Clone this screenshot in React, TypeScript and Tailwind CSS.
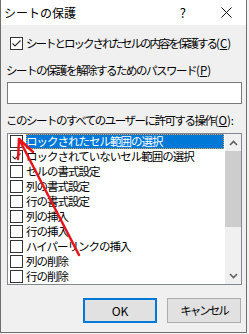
import React from 'react';

const items = [
  { label: 'ロックされたセル範囲の選択', checked: false },
  { label: 'ロックされていないセル範囲の選択', checked: true },
  { label: 'セルの書式設定', checked: false },
  { label: '列の書式設定', checked: false },
  { label: '行の書式設定', checked: false },
  { label: '列の挿入', checked: false },
  { label: '行の挿入', checked: false },
  { label: 'ハイパーリンクの挿入', checked: false },
  { label: '列の削除', checked: false },
  { label: '行の削除', checked: false },
];

// Windows風のチェックボックス
const CheckBox = ({ checked }: { checked: boolean }) => (
  <span className="flex h-[13px] w-[13px] shrink-0 items-center justify-center border border-[#333333] bg-white">
    {checked && (
      <svg width="11" height="11" viewBox="0 0 11 11">
        <path d="M1.5 5.5 L4 8 L9.5 2.5" fill="none" stroke="#333333" strokeWidth="1.2" />
      </svg>
    )}
  </span>
);

// アクセスキー付きの(X)表記
const AccessKey = ({ k, colon }: { k: string; colon?: boolean }) => (
  <span className="tracking-normal">
    (<u>{k}</u>){colon ? ':' : ''}
  </span>
);

const App = () => {
  return (
    <div className="h-[334px] w-[249px] overflow-hidden bg-[#f3f3f3] font-['Noto_Sans_CJK_JP','Noto_Sans',sans-serif] text-[11.5px] leading-[15px] tracking-[-1.5px] text-black">
      <div className="relative flex h-[333px] w-[247px] flex-col border-x border-b border-[#6e6e6e] bg-[#f0f0f0]">
        {/* タイトルバー */}
        <div className="flex h-[25px] items-center bg-white">
          <span className="pl-[3px] text-[12px] tracking-normal">シートの保護</span>
          <span className="ml-auto text-[13px] tracking-normal">?</span>
          <svg className="ml-[35px] mr-[14px]" width="11" height="11" viewBox="0 0 11 11">
            <path d="M0.5 0.5 L10.5 10.5 M10.5 0.5 L0.5 10.5" stroke="#111" strokeWidth="1" />
          </svg>
        </div>

        <label className="ml-[9px] mt-[12px] flex h-[13px] items-center gap-[3px]">
          <CheckBox checked={true} />
          <span className="whitespace-nowrap tracking-[-2px]">
            シートとロックされたセルの内容を保護する
            <AccessKey k="C" />
          </span>
        </label>

        <div className="ml-[5px] mt-[13px] whitespace-nowrap">
          シートの保護を解除するためのパスワード
          <AccessKey k="P" />
        </div>
        <div className="ml-[6px] mt-[4px] h-[22px] w-[235px] border border-[#7a7a7a] bg-white" />

        <div className="ml-[5px] mt-[9px] whitespace-nowrap">
          このシートのすべてのユーザーに許可する操作
          <AccessKey k="O" colon />
        </div>

        {/* 操作リスト */}
        <div className="ml-[6px] mt-[5px] flex h-[152px] w-[235px] border border-[#828790] bg-white">
          <div className="flex-1 pl-[2px] tracking-[-1px]">
            {items.map((item, index) => (
              <div key={item.label} className="flex h-[15px] items-center gap-[3px]">
                <CheckBox checked={item.checked} />
                <span
                  className={
                    index === 0
                      ? 'mr-[1px] flex h-[15px] flex-1 items-center whitespace-nowrap bg-[#0078d7] text-white outline-1 -outline-offset-1 outline-dotted outline-[#e0a040]'
                      : 'whitespace-nowrap'
                  }
                >
                  {item.label}
                </span>
              </div>
            ))}
          </div>
          {/* スクロールバー */}
          <div className="flex w-[16px] flex-col bg-[#f0f0f0]">
            <div className="flex h-[17px] items-center justify-center">
              <svg width="9" height="6" viewBox="0 0 9 6">
                <path d="M1 5 L4.5 1.5 L8 5" fill="none" stroke="#606060" strokeWidth="1.6" />
              </svg>
            </div>
            <div className="h-[76px] bg-[#cdcdcd]" />
            <div className="flex-1" />
            <div className="flex h-[17px] items-center justify-center">
              <svg width="9" height="6" viewBox="0 0 9 6">
                <path d="M1 1 L4.5 4.5 L8 1" fill="none" stroke="#606060" strokeWidth="1.6" />
              </svg>
            </div>
          </div>
        </div>

        <div className="mr-[5px] mt-[13px] flex justify-end gap-[10px]">
          <button className="flex h-[25px] w-[74px] items-center justify-center border-2 border-[#0078d7] bg-[#e1e1e1] text-[12px] tracking-normal">
            OK
          </button>
          <button className="flex h-[25px] w-[74px] items-center justify-center border border-[#adadad] bg-[#e1e1e1] text-[11.5px] tracking-[-2px]">
            キャンセル
          </button>
        </div>

        {/* 赤い矢印 */}
        <svg className="pointer-events-none absolute left-0 top-0" width="247" height="333" viewBox="0 0 247 333">
          <g stroke="#e8141c" strokeWidth="2.5" fill="none" strokeLinecap="round">
            <path d="M78 255 L18 139" />
            <path d="M18 139 L17 159 M18 139 L32 152" />
          </g>
        </svg>
      </div>
    </div>
  );
};

export default App;
